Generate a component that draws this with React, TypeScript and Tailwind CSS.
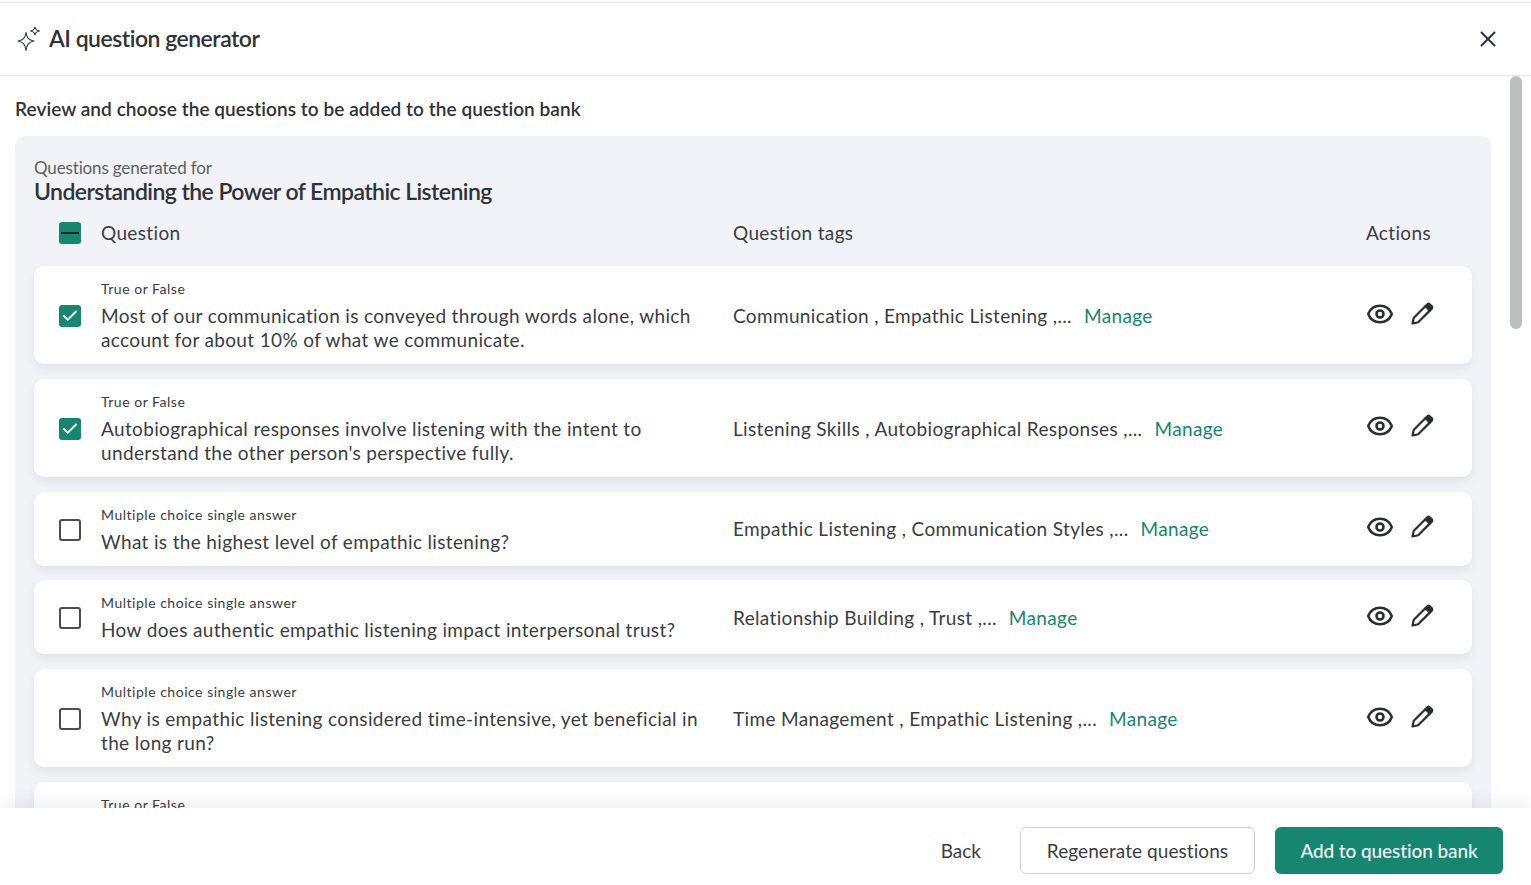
import { Check, Eye, X } from 'lucide-react';

interface Question {
  type: string;
  text: string;
  tags: string;
  checked: boolean;
}

const questions: Question[] = [
  {
    type: 'True or False',
    text: 'Most of our communication is conveyed through words alone, which account for about 10% of what we communicate.',
    tags: 'Communication , Empathic Listening ,...',
    checked: true,
  },
  {
    type: 'True or False',
    text: "Autobiographical responses involve listening with the intent to understand the other person's perspective fully.",
    tags: 'Listening Skills , Autobiographical Responses ,...',
    checked: true,
  },
  {
    type: 'Multiple choice single answer',
    text: 'What is the highest level of empathic listening?',
    tags: 'Empathic Listening , Communication Styles ,...',
    checked: false,
  },
  {
    type: 'Multiple choice single answer',
    text: 'How does authentic empathic listening impact interpersonal trust?',
    tags: 'Relationship Building , Trust ,...',
    checked: false,
  },
  {
    type: 'Multiple choice single answer',
    text: 'Why is empathic listening considered time-intensive, yet beneficial in the long run?',
    tags: 'Time Management , Empathic Listening ,...',
    checked: false,
  },
];

function Sparkles() {
  return (
    <svg width="26" height="28" viewBox="0 0 26 28" fill="none" stroke="#3a3d42" strokeWidth="1.2" strokeLinejoin="round">
      <path d="M10 7.5 C10.8 13 12.5 15 18 16 C12.5 17 10.8 19.5 10 25.5 C9.2 19.5 7.5 17 2 16 C7.5 15 9.2 13 10 7.5 Z" />
      <path d="M19 2 C19.4 4.6 20.4 5.6 23.5 6 C20.4 6.4 19.4 7.4 19 10 C18.6 7.4 17.6 6.4 14.5 6 C17.6 5.6 18.6 4.6 19 2 Z" />
    </svg>
  );
}

function PencilIcon() {
  return (
    <svg width="24" height="24" viewBox="0 0 24 24" fill="none" stroke="#2b2d31" strokeWidth="2.2" strokeLinejoin="round">
      <path d="M2.5 21.5 L3.8 15.8 L15.6 4 L20 8.4 L8.2 20.2 Z" />
      <path d="M15.6 4 L17.4 2.2 C18 1.6 19 1.6 19.6 2.2 L21.8 4.4 C22.4 5 22.4 6 21.8 6.6 L20 8.4 Z" fill="#2b2d31" />
    </svg>
  );
}

function Checkbox({ checked }: { checked: boolean }) {
  if (!checked) {
    return <div className="h-[22px] w-[22px] shrink-0 rounded-[3px] border-2 border-[#4a4d52] bg-white" />;
  }
  return (
    <div className="flex h-[22px] w-[22px] shrink-0 items-center justify-center rounded-[3px] bg-[#168671]">
      <Check size={18} strokeWidth={2.4} className="text-white" />
    </div>
  );
}

function QuestionRow({ q }: { q: Question }) {
  return (
    <div className="flex items-center rounded-[10px] bg-white pt-[14px] pb-[12px] pl-[25px] shadow-[0_5px_10px_rgba(40,50,70,0.08)]">
      <Checkbox checked={q.checked} />
      <div className="ml-[20px] w-[632px] shrink-0 pr-[30px]">
        <div className="text-[14px] leading-[18px] tracking-[0.52px] text-[#3a3d42]">{q.type}</div>
        <div className="mt-[6px] text-[19px] leading-[24px] tracking-[0.35px] text-[#3a3d42]">{q.text}</div>
      </div>
      <div className="flex flex-1 items-center text-[19px] tracking-[0.35px] text-[#3a3d42]">
        <span>{q.tags}</span>
        <span className="ml-[12px] text-[#168671]">Manage</span>
      </div>
      <div className="mr-[38px] mb-[5px] flex items-center gap-[16px] text-[#2b2d31]">
        <Eye size={28} strokeWidth={2.2} />
        <PencilIcon />
      </div>
    </div>
  );
}

export default function App() {
  return (
    <div className="flex h-[885px] w-[1531px] flex-col overflow-hidden bg-white font-['Lato',sans-serif] text-[#2f3237]">
      <header className="mt-[2px] flex h-[74px] shrink-0 items-center justify-between border-y border-[#e6e7ea] pl-[16px] pr-[30px]">
        <div className="flex items-center gap-[7px]">
          <Sparkles />
          <h1 className="mb-[2px] text-[23px] font-semibold tracking-[-0.5px]">AI question generator</h1>
        </div>
        <X size={26} strokeWidth={1.8} className="mb-[1px]" />
      </header>

      <div className="flex min-h-0 flex-1">
        <main className="w-[1491px] shrink-0 overflow-hidden pl-[15px]">
          <p className="mt-[20px] text-[19px] font-semibold leading-[26px] tracking-[0.06px]">
            Review and choose the questions to be added to the question bank
          </p>
          <section className="mt-[14px] rounded-t-[10px] bg-[#f1f3f8] px-[19px] pt-[20px] pb-[20px]">
            <div className="text-[17px] leading-[24px] tracking-[-0.15px] text-[#5c5f64]">Questions generated for</div>
            <h2 className="-mt-[2px] text-[23px] font-semibold leading-[26px] tracking-[-0.57px]">
              Understanding the Power of Empathic Listening
            </h2>
            <div className="flex items-center pl-[25px] pt-[16px] pb-[20px] text-[19px] leading-[26px] tracking-[0.35px] text-[#3a3d42]">
              <div className="flex h-[22px] w-[22px] shrink-0 items-center justify-center rounded-[3px] bg-[#168671]">
                <div className="h-[2px] w-[18px] bg-[#1f2a28]" />
              </div>
              <div className="ml-[20px] w-[632px] shrink-0">Question</div>
              <div className="flex-1">Question tags</div>
              <div className="mr-[41px]">Actions</div>
            </div>
            <div className="flex flex-col gap-[14.8px]">
              {questions.map((q) => (
                <QuestionRow key={q.text} q={q} />
              ))}
              {/* the sixth card is cut off by the footer, only its type label shows */}
              <div className="h-[98px] rounded-[10px] bg-white pt-[14px] pl-[67px] shadow-[0_5px_10px_rgba(40,50,70,0.08)]">
                <div className="text-[14px] leading-[18px] tracking-[0.52px] text-[#3a3d42]">True or False</div>
              </div>
            </div>
          </section>
        </main>
        <div className="ml-[19px] w-[12px] shrink-0">
          <div className="h-[253px] rounded-full bg-[#bcbebe]" />
        </div>
      </div>

      <footer className="relative flex h-[77px] shrink-0 items-start justify-end bg-white pt-[19px] pr-[28px] text-[19px] shadow-[0_-6px_14px_rgba(40,50,70,0.07)]">
        <button className="mr-[39px] flex h-[47px] items-center pt-[2px] text-[#3a3d42]">Back</button>
        <button className="mr-[20px] h-[47px] w-[235px] rounded-[6px] border border-[#cfd1d4] bg-white pt-[2px] tracking-[0.07px] text-[#3a3d42]">
          Regenerate questions
        </button>
        <button className="h-[47px] w-[228px] rounded-[6px] bg-[#168671] pt-[2px] font-medium tracking-[-0.1px] text-[#f2f7f6]">
          Add to question bank
        </button>
      </footer>
    </div>
  );
}
